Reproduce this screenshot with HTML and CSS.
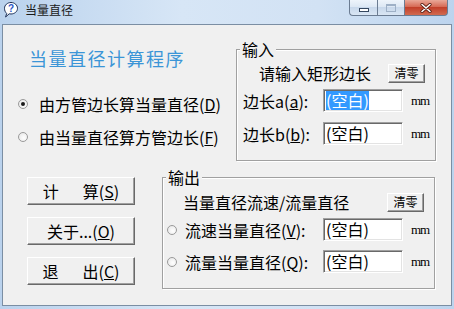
FILE: index.html
```html
<!DOCTYPE html>
<html lang="zh-CN">
<head>
  <meta charset="UTF-8" />
  <title>当量直径</title>
  <link rel="stylesheet" href="styles.css">
</head>
<body>
  <div class="window">
    <div class="titlebar">
      <svg class="app-icon" viewBox="0 0 16 18" width="16" height="18">
        <path d="M8 1.5c3.6 0 6.5 2.6 6.5 5.8S11.6 13 8 13c-.6 0-1.2-.1-1.8-.2L2.6 16l1.1-3.6C2.3 11.3 1.5 9.4 1.5 7.3 1.5 4.1 4.4 1.5 8 1.5z" fill="#fff" stroke="#1c2f57" stroke-width="1"/>
        <text x="8" y="11.2" font-size="10" font-weight="bold" fill="#2a56c6" text-anchor="middle" font-family="Liberation Sans, sans-serif">?</text>
      </svg>
      <span class="title">当量直径</span>
      <div class="caption-buttons">
        <div class="cap cap-min"><span class="min-bar"></span></div>
        <div class="cap cap-max"><span class="max-box"></span></div>
        <div class="cap cap-close">
          <svg viewBox="0 0 12 10" width="12" height="10">
            <path d="M2 1.5l8 7M10 1.5l-8 7" stroke="#5a1f14" stroke-width="3.2" stroke-linecap="round"/>
            <path d="M2 1.5l8 7M10 1.5l-8 7" stroke="#fff" stroke-width="1.6" stroke-linecap="round"/>
          </svg>
        </div>
      </div>
    </div>

    <div class="client">
      <div class="row-top">
        <div class="intro">
          <div class="heading">当量直径计算程序</div>
          <label class="option"><span class="radio checked"></span>由方管边长算当量直径(<u>D</u>)</label>
          <label class="option"><span class="radio"></span>由当量直径算方管边长(<u>F</u>)</label>
        </div>

        <fieldset class="group group-in">
          <legend>输入</legend>
          <div class="group-head">
            <span>请输入矩形边长</span>
            <button class="btn btn-small">清零</button>
          </div>
          <div class="field-row">
            <span class="field-label">边长a(<u>a</u>):</span>
            <div class="field"><span class="sel">(空白)</span></div>
            <span class="unit">mm</span>
          </div>
          <div class="field-row">
            <span class="field-label">边长b(<u>b</u>):</span>
            <div class="field">(空白)</div>
            <span class="unit">mm</span>
          </div>
        </fieldset>
      </div>

      <div class="row-bottom">
        <div class="actions">
          <button class="btn btn-main">计&emsp;&ensp;算(<u>S</u>)</button>
          <button class="btn btn-main">关于...(<u>O</u>)</button>
          <button class="btn btn-main">退&emsp;&ensp;出(<u>C</u>)</button>
        </div>

        <fieldset class="group group-out">
          <legend>输出</legend>
          <div class="group-head">
            <span>当量直径流速/流量直径</span>
            <button class="btn btn-small">清零</button>
          </div>
          <div class="field-row">
            <label class="field-label"><span class="radio"></span>流速当量直径(<u>V</u>):</label>
            <div class="field">(空白)</div>
            <span class="unit">mm</span>
          </div>
          <div class="field-row">
            <label class="field-label"><span class="radio"></span>流量当量直径(<u>Q</u>):</label>
            <div class="field">(空白)</div>
            <span class="unit">mm</span>
          </div>
        </fieldset>
      </div>
    </div>
  </div>
</body>
</html>
```

FILE: styles.css
```css
* {
  box-sizing: border-box;
}
body {
  margin: 0;
  width: 454px;
  height: 309px;
  overflow: hidden;
  font-family: "Noto Sans CJK SC", sans-serif;
  color: #000;
  background: #c4d9f1;
}
.window {
  height: 309px;
  display: flex;
  flex-direction: column;
  background: linear-gradient(to right, #bad2ed, #d7e6f6 40%, #d2e2f4 70%, #bcd4ee);
}

/* title bar */
.titlebar {
  height: 24px;
  display: flex;
  align-items: flex-start;
}
.app-icon {
  margin: 1px 0 0 3px;
}
.title {
  margin-left: 6px;
  font-size: 12px;
  line-height: 20px;
  color: #1a1a1a;
}
.caption-buttons {
  display: flex;
  margin-left: auto;
  margin-right: 6px;
}
.cap {
  height: 16px;
  display: flex;
  align-items: center;
  justify-content: center;
  border: 1px solid #6b7c92;
  border-top: none;
}
.cap-min {
  width: 28px;
  border-right: none;
  border-bottom-left-radius: 4px;
  background: linear-gradient(#eef4fb, #dde8f4 45%, #c8d8eb 50%, #d9e6f4);
}
.cap-max {
  width: 27px;
  border-right: none;
  background: linear-gradient(#eef4fb, #dde8f4 45%, #c8d8eb 50%, #d9e6f4);
}
.cap-close {
  width: 44px;
  border-bottom-right-radius: 4px;
  background: linear-gradient(#e9a898, #d66a55 45%, #c2402a 50%, #d16a50);
}
.min-bar {
  width: 10px;
  height: 4px;
  margin-top: 5px;
  background: #fff;
  border: 1px solid #35475f;
}
.max-box {
  width: 10px;
  height: 8px;
  border: 1px solid #9eb0c6;
  border-top-width: 2px;
  background: transparent;
}

/* client area */
.client {
  flex: 1;
  margin: 0 2px 3px;
  border: 1px solid #7b8ea3;
  background: #f0f0f0;
  font-size: 16px;
}
.row-top {
  display: flex;
  height: 135px;
}
.intro {
  width: 233px;
}
.heading {
  margin: 21px 0 0 26px;
  font-size: 18px;
  letter-spacing: 1.5px;
  line-height: 24px;
  color: #3b95d7;
}
.option {
  display: flex;
  align-items: center;
  height: 20px;
  padding-left: 15px;
  margin-top: 13px;
}
.heading + .option {
  margin-top: 24px;
}
.radio {
  position: relative;
  width: 10px;
  height: 10px;
  margin-right: 11px;
  border: 1px solid #9a9a9a;
  border-radius: 50%;
  background: radial-gradient(circle at 60% 60%, #fff, #e4e4e4);
  flex: none;
}
.radio.checked::after {
  content: "";
  position: absolute;
  left: 2px;
  top: 2px;
  width: 4px;
  height: 4px;
  border-radius: 50%;
  background: #1a1a1a;
}

/* group boxes */
.group {
  margin: 0;
  padding: 0;
  min-width: 0;
  border: 1px solid #a0a0a0;
  box-shadow: inset 1px 1px #fff, 1px 1px #fff;
}
.group legend {
  margin-left: 3px;
  padding: 0 2px;
  font-size: 16px;
  line-height: 18px;
  background: #f0f0f0;
}
.group-in {
  width: 200px;
  height: 121px;
  margin-top: 15px;
}
.group-out {
  width: 273px;
  height: 121px;
  margin-top: 8px;
}
.group-head {
  display: flex;
  align-items: center;
  height: 20px;
  margin-top: 5px;
  padding: 0 10px 0 22px;
  line-height: 20px;
}
.group-out .group-head {
  margin-top: 6px;
  padding-left: 20px;
}
.group-head .btn-small {
  margin-left: auto;
}
.field-row {
  display: flex;
  align-items: center;
  height: 23px;
  margin-top: 10px;
}
.group-head + .field-row {
  margin-top: 6px;
}
.group-out .field-row + .field-row {
  margin-top: 9px;
}
.field-label {
  display: flex;
  align-items: center;
  width: 86px;
  padding-left: 6px;
  white-space: nowrap;
}
.group-out .field-label {
  width: 160px;
  padding-left: 4px;
}
.group-out .radio {
  margin-right: 8px;
}
.field {
  width: 80px;
  height: 23px;
  padding-left: 2px;
  line-height: 21px;
  background: #fff;
  border: 1px solid;
  border-color: #a0a0a0 #fff #fff #a0a0a0;
  box-shadow: inset 1px 1px #696969, inset -1px -1px #e3e3e3;
  white-space: nowrap;
}
.sel {
  display: inline-block;
  line-height: 19px;
  background: #3399ff;
  color: #fff;
}
.unit {
  margin-left: 8px;
  font-family: "Liberation Serif", serif;
  font-size: 13px;
  letter-spacing: -1px;
}

/* buttons */
.btn {
  padding: 0;
  font-family: inherit;
  color: #000;
  background: #f0f0f0;
  border: 1px solid;
  border-color: #fff #696969 #696969 #fff;
  box-shadow: inset -1px -1px #a0a0a0;
  white-space: nowrap;
}
.btn-small {
  width: 37px;
  height: 19px;
  font-size: 12px;
  line-height: 16px;
}
.row-bottom {
  display: flex;
  flex: 1;
}
.actions {
  width: 159px;
  padding: 17px 0 0 24px;
  display: flex;
  flex-direction: column;
  gap: 12px;
}
.btn-main {
  width: 108px;
  height: 28px;
  font-size: 16px;
  line-height: 24px;
}
```
